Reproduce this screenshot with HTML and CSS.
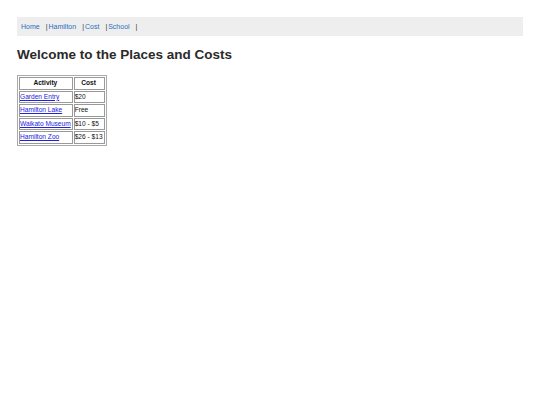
FILE: index.html
```html
<!DOCTYPE html>
<html>
<head>
<meta charset="utf-8">
<link rel="stylesheet" href="styles.css">
</head>
<body>
<nav class="nav">
  <a href="#">Home</a><span class="sep">|</span><a href="#">Hamilton</a><span class="sep">|</span><a href="#">Cost</a><span class="sep">|</span><a href="#">School</a><span class="sep">|</span>
</nav>
<h1 class="title">Welcome to the Places and Costs</h1>
<table class="costs">
  <tr><th>Activity</th><th>Cost</th></tr>
  <tr><td><a href="#">Garden Entry</a></td><td>$20</td></tr>
  <tr><td><a href="#">Hamilton Lake</a></td><td>Free</td></tr>
  <tr><td><a href="#">Waikato Museum</a></td><td>$10 - $5</td></tr>
  <tr><td><a href="#">Hamilton Zoo</a></td><td>$26 - $13</td></tr>
</table>
</body>
</html>
```
FILE: styles.css
```css
body {
  margin: 17px;
  font-family: "Liberation Sans", Arial, sans-serif;
  background: #fff;
  color: #222;
}
.nav {
  background: #eeeeee;
  height: 19px;
  display: flex;
  align-items: center;
  padding-left: 4px;
  font-size: 7px;
}
.nav a {
  color: #2a6ebb;
  text-decoration: none;
}
.nav .sep {
  color: #333;
  margin: 0 1px 0 6px;
}
.title {
  font-size: 13.5px;
  font-weight: bold;
  margin: 11px 0 13px;
  color: #2a2a2a;
}
.costs {
  border: 1px solid #aaa;
  border-spacing: 1px;
  font-size: 6.6px;
  color: #111;
}
.costs th, .costs td {
  border: 1px solid #999;
  padding: 0 1px 0 0;
  line-height: 10.6px;
  text-align: left;
}
.costs th {
  text-align: center;
  font-weight: bold;
}
.costs a {
  color: #2222dd;
}
```
